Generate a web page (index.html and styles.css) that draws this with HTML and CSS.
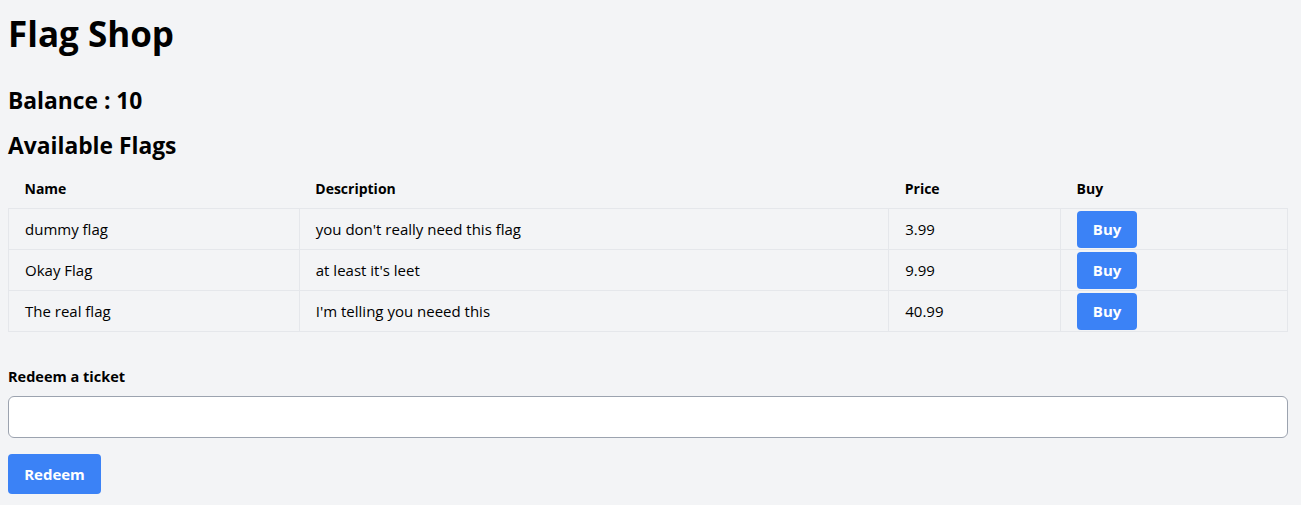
FILE: index.html
```html
<!DOCTYPE html>
<html lang="en">
<head>
<meta charset="utf-8">
<title>Flag Shop</title>
<link rel="stylesheet" href="styles.css">
</head>
<body>
<main class="page">
  <h1 class="title">Flag Shop</h1>
  <h2 class="balance">Balance : 10</h2>
  <h2 class="subtitle">Available Flags</h2>
  <table class="flags">
    <colgroup>
      <col class="c-name"><col class="c-desc"><col class="c-price"><col class="c-buy">
    </colgroup>
    <thead>
      <tr><th>Name</th><th>Description</th><th>Price</th><th>Buy</th></tr>
    </thead>
    <tbody>
      <tr><td>dummy flag</td><td>you don't really need this flag</td><td>3.99</td><td class="buy-cell"><button class="btn btn-buy">Buy</button></td></tr>
      <tr><td>Okay Flag</td><td>at least it's leet</td><td>9.99</td><td class="buy-cell"><button class="btn btn-buy">Buy</button></td></tr>
      <tr><td>The real flag</td><td>I'm telling you neeed this</td><td>40.99</td><td class="buy-cell"><button class="btn btn-buy">Buy</button></td></tr>
    </tbody>
  </table>
  <form class="redeem">
    <label class="label" for="ticket">Redeem a ticket</label>
    <input class="input" id="ticket" type="text">
    <button class="btn btn-redeem" type="button">Redeem</button>
  </form>
</main>
</body>
</html>
```
FILE: styles.css
```css
html, body {
  margin: 0;
  padding: 0;
  background: #f3f4f6;
  color: #000;
  font-family: "Open Sans", "Noto Sans", sans-serif;
}
.page {
  padding: 8px 13px 8px 8px;
  display: flex;
  flex-direction: column;
}
.title {
  font-size: 35px;
  line-height: 40px;
  font-weight: 700;
  margin: 6px 0 0;
}
.balance {
  font-size: 22.8px;
  line-height: 32px;
  font-weight: 700;
  margin: 31px 0 0;
}
.subtitle {
  font-size: 22.8px;
  line-height: 32px;
  font-weight: 700;
  margin: 13px 0 0;
}
.flags {
  width: 100%;
  border-collapse: collapse;
  margin-top: 6px;
  font-size: 15px;
}
.c-name { width: 291px; }
.c-desc { width: 590px; }
.c-price { width: 172px; }
.c-buy { width: 227px; }
.flags th {
  text-align: left;
  font-weight: 700;
  font-size: 14px;
  padding: 8px 16px;
  height: 24px;
}
.flags td {
  border: 1px solid #e5e7eb;
  padding: 8px 16px;
  height: 24px;
  line-height: 24px;
}
.flags td.buy-cell {
  padding: 0 16px;
}
.btn {
  font-family: inherit;
  border: 0;
  background: #3b82f6;
  color: #fff;
  font-weight: 700;
  cursor: pointer;
}
.btn-buy {
  display: block;
  width: 60px;
  height: 37px;
  border-radius: 4px;
  font-size: 15px;
  padding: 0;
}
.redeem {
  display: flex;
  flex-direction: column;
  align-items: flex-start;
  margin-top: 35px;
}
.label {
  font-size: 14.5px;
  font-weight: 700;
  line-height: 20px;
}
.input {
  box-sizing: border-box;
  width: 100%;
  height: 42px;
  margin-top: 9px;
  border: 1px solid #9ca3af;
  border-radius: 6px;
  background: #fff;
  font-family: inherit;
  font-size: 16px;
  padding: 8px 12px;
}
.btn-redeem {
  margin-top: 16px;
  width: 93px;
  height: 40px;
  border-radius: 4px;
  font-size: 15px;
}
```
